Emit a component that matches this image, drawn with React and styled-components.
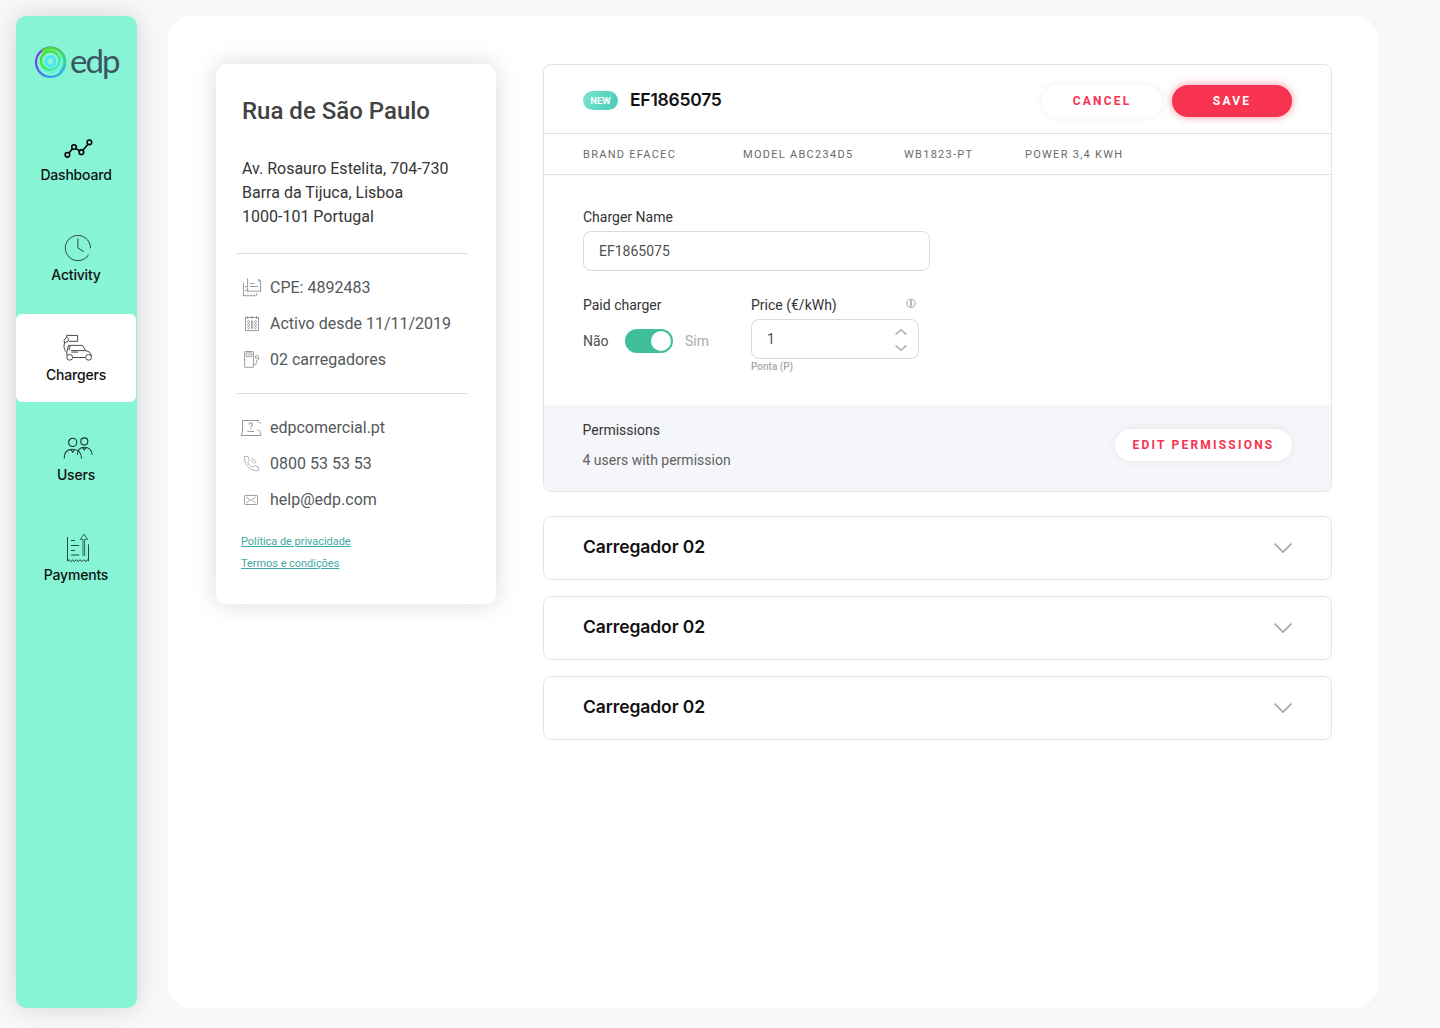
import React from "react";
import styled, { createGlobalStyle, css } from "styled-components";

const ui = `Roboto, "Liberation Sans", sans-serif`;
const brand = `Inter, "Liberation Sans", sans-serif`;

const GlobalStyle = createGlobalStyle`
  *, *::before, *::after { box-sizing: border-box; }
  body { margin: 0; background: #f8f8f8; font-family: ${ui}; }
  h1, h2, p, ul { margin: 0; padding: 0; }
  button { font: inherit; border: 0; padding: 0; cursor: pointer; }
`;

const Page = styled.div`
  display: flex;
  gap: 31px;
  height: 1028px;
  padding: 16px 62px 20px 16px;
  background: #f8f8f8;
`;

const Sidebar = styled.aside`
  flex: 0 0 121px;
  display: flex;
  flex-direction: column;
  border-radius: 10px;
  background: #87f4d5;
  box-shadow: 0 0 24px rgba(0, 0, 0, 0.15);
`;

const Logo = styled.div`
  display: flex;
  align-items: center;
  height: 98px;
  padding: 0 0 6px 18px;
`;

const LogoWord = styled.span`
  margin: 0 0 4px 2px;
  font: 400 33px/40px Lato, sans-serif;
  letter-spacing: -1.9px;
  color: #3e5463;
`;

const Nav = styled.nav`
  display: flex;
  flex-direction: column;
  gap: 12px;
`;

const NavItem = styled.a`
  display: flex;
  flex-direction: column;
  align-items: center;
  width: 120px;
  height: 88px;
  padding-top: 18px;
  border-radius: 6px;
  background: ${(p) => (p.$active ? "#fff" : "transparent")};
  color: #111;

  svg { margin-left: 4px; }
`;

const NavLabel = styled.span`
  margin-top: 1px;
  font: 500 14px/20px ${brand};
  letter-spacing: -0.2px;
`;

const Main = styled.main`
  flex: 1;
  display: flex;
  align-items: flex-start;
  gap: 47px;
  padding: 48px 46px 48px 48px;
  border-radius: 24px;
  background: #fff;
`;

const InfoCard = styled.section`
  flex: 0 0 280px;
  height: 540px;
  padding: 31px 20px 0;
  border-radius: 10px;
  background: #fff;
  box-shadow: 0 0 24px rgba(0, 0, 0, 0.15);
`;

const Street = styled.h1`
  padding-left: 6px;
  font-weight: 500;
  font-size: 24px;
  line-height: 32px;
  color: #424242;
`;

const Address = styled.p`
  padding: 30px 0 0 6px;
  font-size: 16px;
  line-height: 24px;
  color: #353535;
`;

const Rule = styled.hr`
  width: 232px;
  height: 1px;
  margin: ${(p) => p.$top}px 0 0;
  border: 0;
  background: #dedede;
`;

const Details = styled.ul`
  display: flex;
  flex-direction: column;
  margin-top: 16px;
  list-style: none;
`;

const Detail = styled.li`
  display: flex;
  align-items: center;
  gap: 8px;
  height: 36px;
  padding-left: 4px;
  font-size: 16px;
  line-height: 20px;
  color: #55585a;
`;

const Links = styled.div`
  display: flex;
  flex-direction: column;
  align-items: flex-start;
  padding: 13px 0 0 5px;

  a {
    font-size: 11px;
    line-height: 22px;
    letter-spacing: -0.04px;
    color: #3fa9a4;
    text-decoration: underline;
  }
`;

const Column = styled.div`
  flex: 1;
  display: flex;
  flex-direction: column;
  gap: 16px;
`;

const cardFrame = css`
  border: 1px solid #e4e4e6;
  border-radius: 8px;
  background: #fff;
`;

const Charger = styled.section`
  ${cardFrame}
  height: 428px;
  margin-bottom: 8px;
  overflow: hidden;
`;

const ChargerHead = styled.header`
  display: flex;
  align-items: center;
  height: 69px;
  padding: 4px 39px 0;
  border-bottom: 1px solid #dfdfdf;
`;

const Badge = styled.span`
  width: 35px;
  height: 19px;
  margin: 0 12px 1px 0;
  border-radius: 10px;
  background: linear-gradient(115deg, #78e5cb, #48cab8);
  color: #fff;
  font-weight: 700;
  font-size: 9.5px;
  line-height: 19px;
  text-align: center;
`;

const Name = styled.h2`
  margin-bottom: ${(p) => p.$lift || 0}px;
  font: 600 17.5px/24px ${brand};
  letter-spacing: ${(p) => p.$track}px;
  color: #111;
`;

const Actions = styled.div`
  display: flex;
  gap: 10px;
  margin-left: auto;
`;

const Button = styled.button`
  width: ${(p) => p.$width || 120}px;
  height: 32px;
  border-radius: 16px;
  background: ${(p) => (p.$primary ? "#f7334f" : "#fff")};
  box-shadow: ${(p) => (p.$primary ? "0 0 8px rgba(247, 51, 79, 0.55)" : "0 0 10px rgba(0, 0, 0, 0.07)")};
  color: ${(p) => (p.$primary ? "#fff" : "#f7334f")};
  font-weight: 700;
  font-size: 12px;
  letter-spacing: 2.2px;
`;

const Specs = styled.div`
  display: grid;
  grid-template-columns: 160px 161px 121px auto;
  align-items: center;
  height: 41px;
  padding: 0 39px;
  border-bottom: 1px solid #dfdfdf;
  font-size: 11px;
  letter-spacing: 1.28px;
  color: #6b6b6b;
`;

const Form = styled.div`
  display: flex;
  flex-direction: column;
  gap: 24px;
  height: 230px;
  padding: 32px 39px 0;
`;

const FieldRow = styled.div`
  display: grid;
  grid-template-columns: 168px 168px;
`;

const Field = styled.div`
  display: flex;
  flex-direction: column;
`;

const Label = styled.label`
  display: flex;
  justify-content: space-between;
  margin-bottom: 4px;
  padding-right: 3px;
  font-size: 14px;
  line-height: 20px;
  color: #353535;
`;

const Input = styled.div`
  display: flex;
  align-items: center;
  justify-content: space-between;
  width: ${(p) => p.$width}px;
  height: 40px;
  padding: 0 11px 0 15px;
  border: 1px solid #dadada;
  border-radius: 8px;
  font-size: 14px;
  color: #505050;
`;

const Steppers = styled.span`
  display: flex;
  flex-direction: column;
  gap: 10px;
  padding-top: 2px;
`;

const Hint = styled.span`
  margin-top: 2px;
  font-weight: 500;
  font-size: 10px;
  line-height: 12px;
  color: #a8a8a8;
`;

const Toggle = styled.div`
  display: flex;
  align-items: center;
  height: 44px;
  font-size: 14px;
  color: #505050;
`;

const Track = styled.span`
  display: flex;
  justify-content: flex-end;
  width: 48px;
  height: 24px;
  margin: 0 12px 0 16px;
  padding: 2px;
  border-radius: 12px;
  background: #3fbf9c;

  &::after {
    content: "";
    width: 20px;
    height: 20px;
    border-radius: 50%;
    background: #fff;
  }
`;

const ToggleOn = styled.span`
  width: 26px;
`;

const ToggleOff = styled.span`
  color: #adadad;
`;

const Permissions = styled.footer`
  display: flex;
  justify-content: space-between;
  align-items: flex-start;
  height: 86px;
  padding: 15px 39px 0 38.5px;
  background: #f4f6fa;
`;

const PermissionText = styled.div`
  display: flex;
  flex-direction: column;
  gap: 10px;
  font-size: 14px;
  line-height: 20px;
  color: #626262;

  strong { font-weight: 400; color: #353535; }
`;

const PermissionAction = styled.div`
  padding-top: 9px;
`;

const Accordion = styled.section`
  ${cardFrame}
  display: flex;
  align-items: center;
  justify-content: space-between;
  height: 64px;
  padding: 0 39px 2px;

  svg { margin-top: 2px; }
`;

const Svg = ({ w, h = w, sw = 1, color = "currentColor", children }) => (
  <svg width={w} height={h} viewBox={`0 0 ${w} ${h}`} fill="none" stroke={color} strokeWidth={sw}>
    {children}
  </svg>
);

const LogoMark = () => (
  <svg width="34" height="34" viewBox="0 0 34 34" fill="none">
    <defs>
      <linearGradient id="ringOuter" x1="0" y1="0" x2="1" y2="1">
        <stop offset="0" stopColor="#8a2bf0" />
        <stop offset="0.35" stopColor="#5b4ff5" />
        <stop offset="0.7" stopColor="#2d9be6" />
        <stop offset="1" stopColor="#35c8e0" />
      </linearGradient>
      <linearGradient id="ringRight" x1="0" y1="0" x2="0" y2="1">
        <stop offset="0" stopColor="#4fe01e" />
        <stop offset="0.6" stopColor="#35d78a" />
        <stop offset="1" stopColor="#2fa8e6" />
      </linearGradient>
      <linearGradient id="ringMid" x1="0" y1="0" x2="1" y2="1">
        <stop offset="0" stopColor="#4be01c" />
        <stop offset="0.5" stopColor="#3fe84c" />
        <stop offset="1" stopColor="#45e4f2" />
      </linearGradient>
    </defs>
    <circle cx="16.6" cy="17.3" r="14.6" stroke="url(#ringOuter)" strokeWidth="2.2" />
    <path d="M8 6.2C15 .8 24 2.5 28.5 9.3C32.2 15.6 31 23 26 28" stroke="url(#ringRight)" strokeWidth="2.4" />
    <circle cx="18" cy="17" r="10.6" stroke="#52e9ed" strokeWidth="1.6" opacity="0.6" />
    <circle cx="16.2" cy="15.6" r="9.3" stroke="url(#ringMid)" strokeWidth="2.5" />
    <circle cx="16.4" cy="16.4" r="4.6" stroke="#48e6f2" strokeWidth="3" />
  </svg>
);

const DashboardIcon = () => (
  <Svg w={32} sw={1.6} color="#050505">
    <circle cx="5.4" cy="22.8" r="2.3" />
    <circle cx="12" cy="15" r="2.3" />
    <circle cx="19.4" cy="20.2" r="2.3" />
    <circle cx="27.4" cy="10.3" r="2.3" />
    <path d="M6.9 21L10.5 16.8M13.9 16.3L17.5 18.8M20.9 18.3L25.9 12.2" />
  </Svg>
);

const ActivityIcon = () => (
  <Svg w={32} color="#25493f">
    <path d="M28.5 16.2A12.6 12.6 0 1 0 26.6 22.7" />
    <path d="M15.9 6.5V16L21.7 19.6" />
  </Svg>
);

const ChargersIcon = () => (
  <Svg w={32} color="#4a4a4a">
    <path d="M4.7 5V3.4H15.6V9.3H6.8" />
    <path d="M4.7 5L2 8.3L2.8 11L5.3 9.8L7 7.3L4.7 5ZM2.6 10.5C1.5 14 2 17 3.5 19.5" />
    <path d="M4.8 23.5V20L6.5 13.4H20.5L23.8 18.7L27.6 20.1Q29 21 29.2 24.2M8.2 13.6L7 18.4M9 18.6H24M9.3 20.1H16M11 25.5H23.5" />
    <circle cx="7.7" cy="25.3" r="2.9" />
    <circle cx="26.6" cy="25.3" r="2.9" />
  </Svg>
);

const UsersIcon = () => (
  <Svg w={32} sw={1.1} color="#16372e">
    <circle cx="10.7" cy="10.4" r="4.1" />
    <circle cx="22.3" cy="9.4" r="3.5" />
    <path d="M2.2 26.5C2.2 20.7 5.5 17.3 10.7 17.3S19.4 20.7 19.6 26.5M8.8 17.5L10.7 20L12.6 17.5" />
    <path d="M15.3 22.8C15.6 18 18.2 15.2 22.3 15.2S29.8 18 30.2 22.8M20.5 15.4L22.3 17.8L24.1 15.4" />
  </Svg>
);

const PaymentsIcon = () => (
  <Svg w={32} color="#25493f">
    <path d="M5.5 5V29L7.3 27.7L9 29.7L10.8 27.7L12.6 29.7L14.4 27.7L16.2 29.7L18 27.7L19.8 29.7L21.6 27.7L23.4 29.7L25.1 27.7L26.5 29V12.3" />
    <path d="M9 8.5H13M9 13.5H17.2M9 18.5H13M9 23H17.2" />
    <path d="M21 24V7.4H18.3L22 2L25.7 7.4H22.6V24" strokeWidth="0.8" />
  </Svg>
);

const tint = "#8f9193";

const ReceiptIcon = () => (
  <Svg w={22} sw={0.9} color={tint}>
    <path d="M3.5 5.5V19.2L5 18.1L6.5 19.2L8 18.1L9.5 19.2L11 18.1L12.5 19.2L14 18.1L15.5 19.2L16.7 18V16.4" />
    <path d="M7.6 1.3V14.8L9.2 13.7L10.8 14.8L12.4 13.7L14 14.8L15.6 13.7L17.2 14.8L18.8 13.7L20.6 14.8V4L18.6 2V4H20.6" />
    <path d="M10 6.5H14.3M10 9.5H17.8M5 9.5H7M5 13.2H7" />
  </Svg>
);

const CalendarIcon = () => (
  <Svg w={22} sw={0.9} color={tint}>
    <rect x="5.5" y="4.5" width="13" height="13" />
    <path d="M7.7 3V6M12 3V6M16.5 3V6" />
    <g strokeWidth="0.8">
      <circle cx="8.6" cy="8.6" r="1" />
      <circle cx="8.6" cy="11.6" r="1" />
      <circle cx="8.6" cy="14.6" r="1" />
      <circle cx="15.5" cy="8.6" r="1" />
      <circle cx="15.5" cy="11.6" r="1" />
      <circle cx="15.5" cy="14.6" r="1" />
      <path d="M11.5 7.4V15.8M12.7 7.4V15.8" />
    </g>
  </Svg>
);

const PumpIcon = () => (
  <Svg w={22} sw={0.9} color={tint}>
    <rect x="4.6" y="2.5" width="8.8" height="15.8" rx="0.6" />
    <path d="M6.4 3.9H11.8V7.6H6.4ZM8 5.8H9M10 4.8V6.6" strokeWidth="0.8" />
    <path d="M14 15.6H15.4Q16.3 15.6 16.3 14.4V11.8L18.6 10.4V7.6L17 6.6L15.3 7.4L15.8 9.4L17.4 9.4" />
  </Svg>
);

const LaptopIcon = () => (
  <Svg w={22} sw={0.95} color={tint}>
    <path d="M2.5 15.3V3.5H19M18 4.5V6M20.3 4.8V6.8M18.2 12.5V14M20 13.5V15.6L21 18.5H1L2.5 15.3" />
    <path d="M7.4 14.4H14.3" />
    <path d="M9.1 7.4C9.1 5.3 12.4 5.3 12.4 7.3C12.4 8.8 10.8 8.8 10.8 10.3M10.8 11.3V12.2" strokeWidth="1.1" />
  </Svg>
);

const PhoneIcon = () => (
  <Svg w={22} sw={0.8} color="#a2a2a4">
    <path d="M4.3 3.4L8 3.4L9.1 7.7L7.7 9.3C8.6 11.4 10.4 13.2 12.6 14L14.3 12.6L18.4 13.8V17.8C10.5 18.4 4 12.4 4.3 3.4Z" />
    <path d="M11.3 5.3C13.6 5.9 15.5 7.8 16.2 10.2M11.3 7.6C12.7 8.1 13.8 9.2 14.3 10.6" />
  </Svg>
);

const MailIcon = () => (
  <Svg w={22} sw={0.9} color={tint}>
    <rect x="4.5" y="6.4" width="13" height="9.1" rx="0.8" />
    <path d="M6.3 8L11 11.8L15.7 8M6.3 14L9 11.7M15.7 14L13 11.7" />
  </Svg>
);

const InfoIcon = () => (
  <svg width="10" height="20" viewBox="0 0 10 20" fill="none" stroke="#8c8c8c" strokeWidth="0.8">
    <circle cx="5" cy="8.3" r="4.2" />
    <path d="M4.4 5.6H5.6V11H4.4Z" strokeWidth="0.7" />
  </svg>
);

const Chevron = ({ w, h, up, sw }) => (
  <Svg w={w} h={h} sw={sw} color="#a9a9a9">
    <path d={up ? `M.6 ${h - 0.6}L${w / 2} .9L${w - 0.6} ${h - 0.6}` : `M.6 .6L${w / 2} ${h - 0.9}L${w - 0.6} .6`} />
  </Svg>
);

const navItems = [
  { label: "Dashboard", Icon: DashboardIcon },
  { label: "Activity", Icon: ActivityIcon },
  { label: "Chargers", Icon: ChargersIcon, active: true },
  { label: "Users", Icon: UsersIcon },
  { label: "Payments", Icon: PaymentsIcon },
];

const siteDetails = [
  { text: "CPE: 4892483", Icon: ReceiptIcon },
  { text: "Activo desde 11/11/2019", Icon: CalendarIcon },
  { text: "02 carregadores", Icon: PumpIcon },
];

const contacts = [
  { text: "edpcomercial.pt", Icon: LaptopIcon },
  { text: "0800 53 53 53", Icon: PhoneIcon },
  { text: "help@edp.com", Icon: MailIcon },
];

const DetailList = ({ items }) => (
  <Details>
    {items.map(({ text, Icon }) => (
      <Detail key={text}>
        <Icon />
        <span>{text}</span>
      </Detail>
    ))}
  </Details>
);

export default function App() {
  return (
    <>
      <GlobalStyle />
      <Page>
        <Sidebar>
          <Logo>
            <LogoMark />
            <LogoWord>edp</LogoWord>
          </Logo>
          <Nav>
            {navItems.map(({ label, Icon, active }) => (
              <NavItem key={label} $active={active}>
                <Icon />
                <NavLabel>{label}</NavLabel>
              </NavItem>
            ))}
          </Nav>
        </Sidebar>
        <Main>
          <InfoCard>
            <Street>Rua de São Paulo</Street>
            <Address>
              Av. Rosauro Estelita, 704-730
              <br />
              Barra da Tijuca, Lisboa
              <br />
              1000-101 Portugal
            </Address>
            <Rule $top={24} />
            <DetailList items={siteDetails} />
            <Rule $top={15} />
            <DetailList items={contacts} />
            <Links>
              <a>Política de privacidade</a>
              <a>Termos e condições</a>
            </Links>
          </InfoCard>
          <Column>
            <Charger>
              <ChargerHead>
                <Badge>NEW</Badge>
                <Name $track={-0.25} $lift={2}>EF1865075</Name>
                <Actions>
                  <Button>CANCEL</Button>
                  <Button $primary>SAVE</Button>
                </Actions>
              </ChargerHead>
              <Specs>
                <span>BRAND EFACEC</span>
                <span>MODEL ABC234D5</span>
                <span>WB1823-PT</span>
                <span>POWER 3,4 KWH</span>
              </Specs>
              <Form>
                <Field>
                  <Label>Charger Name</Label>
                  <Input $width={347}>EF1865075</Input>
                </Field>
                <FieldRow>
                  <Field>
                    <Label>Paid charger</Label>
                    <Toggle>
                      <ToggleOn>Não</ToggleOn>
                      <Track />
                      <ToggleOff>Sim</ToggleOff>
                    </Toggle>
                  </Field>
                  <Field>
                    <Label>
                      Price (€/kWh)
                      <InfoIcon />
                    </Label>
                    <Input $width={168}>
                      1
                      <Steppers>
                        <Chevron w={12} h={6} sw={1.4} up />
                        <Chevron w={12} h={6} sw={1.4} />
                      </Steppers>
                    </Input>
                    <Hint>Ponta (P)</Hint>
                  </Field>
                </FieldRow>
              </Form>
              <Permissions>
                <PermissionText>
                  <strong>Permissions</strong>
                  <span>4 users with permission</span>
                </PermissionText>
                <PermissionAction>
                  <Button $width={177}>EDIT PERMISSIONS</Button>
                </PermissionAction>
              </Permissions>
            </Charger>
            {[0, 1, 2].map((i) => (
              <Accordion key={i}>
                <Name $track={-0.1}>Carregador 02</Name>
                <Chevron w={18} h={10} sw={1.8} />
              </Accordion>
            ))}
          </Column>
        </Main>
      </Page>
    </>
  );
}
